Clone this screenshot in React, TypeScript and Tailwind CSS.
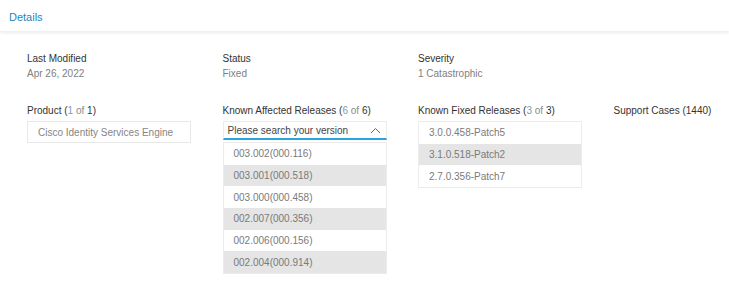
import React from "react";

const affected = [
  "003.002(000.116)",
  "003.001(000.518)",
  "003.000(000.458)",
  "002.007(000.356)",
  "002.006(000.156)",
  "002.004(000.914)",
];
const fixed = ["3.0.0.458-Patch5", "3.1.0.518-Patch2", "2.7.0.356-Patch7"];

function Count({ a, b }: { a: string; b: string }) {
  return (
    <span>
      {" "}(<span className="text-[#7a9cb4]">{a}</span>
      <span className="text-[#8a8a8a]"> of </span>
      {b})
    </span>
  );
}

export default function App() {
  return (
    <div
      className="w-[729px] h-[288px] bg-white text-[10px] leading-[15px] text-[#333]"
      style={{ fontFamily: '"Liberation Sans", Arial, sans-serif' }}
    >
      <div className="h-[31px] pl-[9px] flex items-center pt-[4px] text-[11px] text-[#1f86c2] shadow-[0_2px_3px_rgba(0,0,0,0.08)]">
        Details
      </div>
      <div className="pl-[27px] pt-[20px]">
        <div className="grid grid-cols-[195.5px_195.5px_195.5px_1fr]">
          <div>
            <div>Last Modified</div>
            <div className="text-[#808080]">Apr 26, 2022</div>
          </div>
          <div>
            <div>Status</div>
            <div className="text-[#808080]">Fixed</div>
          </div>
          <div>
            <div>Severity</div>
            <div className="text-[#808080]">1 Catastrophic</div>
          </div>
          <div />
        </div>
        <div className="grid grid-cols-[195.5px_195.5px_195.5px_1fr] mt-[22px] items-start">
          <div>
            <div>
              Product<Count a="1" b="1" />
            </div>
            <div className="mt-[3px] w-[164px] h-[22px] border border-[#e8e8e8] pl-[10px] flex items-center text-[#858585]">
              Cisco Identity Services Engine
            </div>
          </div>
          <div>
            <div>
              Known Affected Releases<Count a="6" b="6" />
            </div>
            <div className="mt-[3px] w-[164px] h-[19px] border border-[#ececec] border-b-2 border-b-[#2aa3dc] pl-[4px] pr-[4px] flex items-center justify-between text-[#444]">
              <span>Please search your version</span>
              <svg width="11" height="7" viewBox="0 0 11 7" className="mr-[1px]">
                <path d="M1 6 L5.5 1.5 L10 6" fill="none" stroke="#666" strokeWidth="1" />
              </svg>
            </div>
            <div className="mt-[2px] w-[164px] border border-[#ececec] text-[#7a7a7a]">
              {affected.map((v, i) => (
                <div
                  key={v}
                  className={`h-[21.7px] pl-[10px] flex items-center ${i % 2 === 1 ? "bg-[#e5e5e5]" : "bg-white"}`}
                >
                  {v}
                </div>
              ))}
            </div>
          </div>
          <div>
            <div>
              Known Fixed Releases<Count a="3" b="3" />
            </div>
            <div className="mt-[3px] w-[164px] border border-[#ececec] text-[#7a7a7a]">
              {fixed.map((v, i) => (
                <div
                  key={v}
                  className={`h-[21.7px] pl-[10px] flex items-center ${i % 2 === 1 ? "bg-[#e5e5e5]" : "bg-white"}`}
                >
                  {v}
                </div>
              ))}
            </div>
          </div>
          <div>
            <div>Support Cases (1440)</div>
          </div>
        </div>
      </div>
    </div>
  );
}
